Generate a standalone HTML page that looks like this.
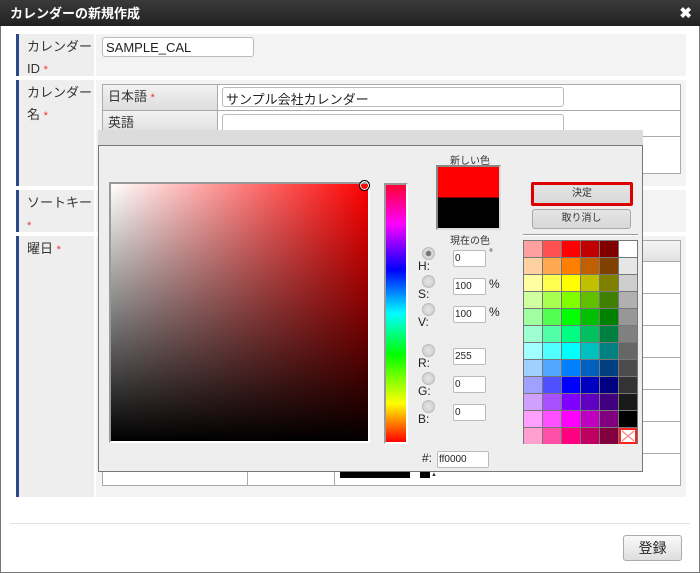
<!DOCTYPE html>
<html><head><meta charset="utf-8"><style>
*{box-sizing:border-box;margin:0;padding:0}
body{width:700px;height:573px;overflow:hidden;background:#fff;font-family:"Liberation Sans","Noto Sans CJK JP",sans-serif;font-size:13px;color:#333;position:relative}
.a{position:absolute}
.title{left:0;top:0;width:700px;height:26px;background:linear-gradient(#3a3a3a,#222);color:#fff;font-weight:bold;font-size:13px;padding:3px 0 0 10px}
.frame{left:0;top:26px;width:700px;height:547px;border:1px solid #777;border-top:none}
.lbl{background:#eee;border-left:3px solid #2b4a8b;padding:2px 0 0 8px;line-height:22px;font-size:13px;color:#333}
.val{background:#f3f3f3}
.star{color:#e33;font-size:11px}
.inp{background:#fff;border:1px solid #bbb;border-radius:3px}
.ih{background:linear-gradient(#f2f2f2,#ddd);border:1px solid #aaa;padding:1px 0 0 5px;font-size:13px}
.ic{background:#fff;border:1px solid #aaa}
.pk{left:98px;top:130px;width:545px;height:342px;background:#eee;border:1px solid #777;border-top:none}
.sm{font-size:11px}
.radio{width:13px;height:13px;border-radius:50%;background:radial-gradient(#e6e6e6,#c8c8c8);border:1px solid #bbb}
.ti{background:#fff;border:1px solid #bbb;border-radius:2px;height:17px;font-size:10px;padding:2px 0 0 1px;color:#222;width:33px}
.L{font-size:12px;color:#222}
.pal{left:523px;top:240px;width:115px;height:204px;background:#777;display:grid;grid-template-columns:repeat(6,18px);grid-template-rows:repeat(12,16px);gap:1px;padding:1px}
.btn{background:linear-gradient(#e4e4e4,#d8d8d8);border:1px solid #aaa;border-radius:3px;text-align:center;font-size:10px;color:#333}
</style></head><body>
<div class="a title">カレンダーの新規作成</div>
<div class="a" style="right:8px;top:4px;color:#fff;font-weight:bold;font-size:15px">✖</div>
<div class="a frame"></div>

<div class="a lbl" style="left:16px;top:34px;width:78px;height:42px">カレンダー<br>ID <span class="star">*</span></div>
<div class="a val" style="left:96px;top:34px;width:590px;height:42px"></div>
<div class="a inp" style="left:102px;top:37px;width:152px;height:20px;padding:2px 0 0 3px;font-size:13px;color:#222">SAMPLE_CAL</div>

<div class="a lbl" style="left:16px;top:80px;width:78px;height:106px">カレンダー<br>名 <span class="star">*</span></div>
<div class="a val" style="left:96px;top:80px;width:590px;height:106px"></div>
<div class="a ih" style="left:102px;top:84px;width:116px;height:27px">日本語 <span class="star">*</span></div>
<div class="a ic" style="left:217px;top:84px;width:464px;height:27px"></div>
<div class="a inp" style="left:222px;top:87px;width:342px;height:20px;padding:1px 0 0 3px;font-size:13px;color:#222">サンプル会社カレンダー</div>
<div class="a ih" style="left:102px;top:110px;width:116px;height:27px">英語</div>
<div class="a ic" style="left:217px;top:110px;width:464px;height:27px"></div>
<div class="a inp" style="left:222px;top:114px;width:342px;height:20px"></div>
<div class="a ic" style="left:217px;top:136px;width:464px;height:38px"></div>

<div class="a lbl" style="left:16px;top:190px;width:78px;height:42px">ソートキー<br><span class="star">*</span></div>
<div class="a val" style="left:96px;top:190px;width:590px;height:42px"></div>

<div class="a lbl" style="left:16px;top:236px;width:78px;height:261px">曜日 <span class="star">*</span></div>
<div class="a val" style="left:96px;top:236px;width:590px;height:261px"></div>
<div class="a" style="left:102px;top:240px;width:579px;height:246px;background:#fff;border:1px solid #aaa"></div>
<div class="a" style="left:102px;top:240px;width:579px;height:22px;background:linear-gradient(#f4f4f4,#e2e2e2);border:1px solid #aaa"></div>
<div class="a" style="left:642px;top:293px;width:39px;border-top:1px solid #aaa"></div>
<div class="a" style="left:642px;top:325px;width:39px;border-top:1px solid #aaa"></div>
<div class="a" style="left:642px;top:357px;width:39px;border-top:1px solid #aaa"></div>
<div class="a" style="left:642px;top:389px;width:39px;border-top:1px solid #aaa"></div>
<div class="a" style="left:642px;top:421px;width:39px;border-top:1px solid #aaa"></div>
<div class="a" style="left:642px;top:453px;width:39px;border-top:1px solid #aaa"></div>
<div class="a" style="left:247px;top:470px;height:16px;border-left:1px solid #aaa"></div>
<div class="a" style="left:334px;top:470px;height:16px;border-left:1px solid #aaa"></div>
<div class="a" style="left:340px;top:471px;width:70px;height:7px;background:#000"></div>
<div class="a" style="left:420px;top:471px;width:10px;height:7px;background:#000"></div>
<div class="a" style="left:431px;top:472px;font-size:6px">▲</div>

<div class="a" style="left:10px;top:523px;width:680px;border-top:1px solid #e4e4e4"></div>
<div class="a" style="left:623px;top:535px;width:59px;height:26px;border:1px solid #aaa;border-radius:3px;background:linear-gradient(#fafafa,#ddd);text-align:center;line-height:24px;font-size:14px;color:#222">登録</div>

<!-- picker -->
<div class="a" style="left:98px;top:130px;width:545px;height:16px;background:#dcdcdc;border-bottom:1px solid #777"></div>
<div class="a pk" style="top:146px;height:326px"></div>
<div class="a" style="left:109px;top:182px;width:261px;height:261px;border:2px solid #999;border-right-color:#fff;border-bottom-color:#fff;background:linear-gradient(to bottom,rgba(0,0,0,0),#000),linear-gradient(to right,#fff,#f00)"></div>
<div class="a" style="left:360px;top:181px;width:9px;height:9px;border:1.5px solid #fff;border-radius:50%;outline:1px solid #000"></div>
<div class="a" style="left:384px;top:183px;width:24px;height:261px;border:2px solid #999;border-right-color:#fff;border-bottom-color:#fff;background:linear-gradient(to bottom,#f03,#f0f 15%,#00f 33%,#0ff 50%,#0f0 66%,#ff0 85%,#f00)"></div>

<div class="a sm" style="left:450px;top:152px;font-size:10px">新しい色</div>
<div class="a" style="left:436px;top:165px;width:65px;height:65px;border:2px solid #888;border-right-color:#ddd;border-bottom-color:#ddd;background:linear-gradient(#f00 50%,#000 50%)"></div>
<div class="a sm" style="left:450px;top:232px;font-size:10px">現在の色</div>

<div class="a radio" style="left:422px;top:247px;background:radial-gradient(#777 30%,#ddd 40%,#c8c8c8)"></div>
<div class="a L" style="left:418px;top:259px">H:</div>
<div class="a ti" style="left:453px;top:250px">0</div><div class="a L" style="left:489px;top:248px;font-size:10px">°</div>
<div class="a radio" style="left:422px;top:275px"></div>
<div class="a L" style="left:418px;top:287px">S:</div>
<div class="a ti" style="left:453px;top:278px">100</div><div class="a L" style="left:489px;top:277px">%</div>
<div class="a radio" style="left:422px;top:303px"></div>
<div class="a L" style="left:418px;top:315px">V:</div>
<div class="a ti" style="left:453px;top:306px">100</div><div class="a L" style="left:489px;top:305px">%</div>
<div class="a radio" style="left:422px;top:344px"></div>
<div class="a L" style="left:418px;top:356px">R:</div>
<div class="a ti" style="left:453px;top:348px">255</div>
<div class="a radio" style="left:422px;top:372px"></div>
<div class="a L" style="left:418px;top:384px">G:</div>
<div class="a ti" style="left:453px;top:376px">0</div>
<div class="a radio" style="left:422px;top:400px"></div>
<div class="a L" style="left:418px;top:412px">B:</div>
<div class="a ti" style="left:453px;top:404px">0</div>
<div class="a L" style="left:422px;top:451px">#:</div>
<div class="a ti" style="left:437px;top:451px;width:52px">ff0000</div>

<div class="a btn" style="left:531px;top:182px;width:102px;height:24px;border:3px solid #d00;border-radius:2px;line-height:18px">決定</div>
<div class="a btn" style="left:532px;top:209px;width:99px;height:20px;line-height:18px">取り消し</div>
<div class="a" style="left:523px;top:234px;width:115px;border-top:1px solid #999;border-bottom:1px solid #fff"></div>

<div class="a pal">
<div style="background:#ffa0a0"></div><div style="background:#ff5050"></div><div style="background:#f00"></div><div style="background:#c00000"></div><div style="background:#800000"></div><div style="background:#fff"></div>
<div style="background:#ffd0a0"></div><div style="background:#ffa850"></div><div style="background:#ff8000"></div><div style="background:#c06000"></div><div style="background:#804000"></div><div style="background:#e6e6e6"></div>
<div style="background:#ffffa0"></div><div style="background:#ffff50"></div><div style="background:#ff0"></div><div style="background:#c0c000"></div><div style="background:#808000"></div><div style="background:#cecece"></div>
<div style="background:#d0ffa0"></div><div style="background:#a8ff50"></div><div style="background:#80ff00"></div><div style="background:#60c000"></div><div style="background:#408000"></div><div style="background:#b0b0b0"></div>
<div style="background:#a0ffa0"></div><div style="background:#50ff50"></div><div style="background:#0f0"></div><div style="background:#00c000"></div><div style="background:#008000"></div><div style="background:#979797"></div>
<div style="background:#a0ffd0"></div><div style="background:#50ffa8"></div><div style="background:#00ff80"></div><div style="background:#00c060"></div><div style="background:#008040"></div><div style="background:#808080"></div>
<div style="background:#a0ffff"></div><div style="background:#50ffff"></div><div style="background:#0ff"></div><div style="background:#00c0c0"></div><div style="background:#008080"></div><div style="background:#666"></div>
<div style="background:#a0d0ff"></div><div style="background:#50a8ff"></div><div style="background:#0080ff"></div><div style="background:#0060c0"></div><div style="background:#004080"></div><div style="background:#4c4c4c"></div>
<div style="background:#a0a0ff"></div><div style="background:#5050ff"></div><div style="background:#00f"></div><div style="background:#0000c0"></div><div style="background:#000080"></div><div style="background:#333"></div>
<div style="background:#d0a0ff"></div><div style="background:#a850ff"></div><div style="background:#8000ff"></div><div style="background:#6000c0"></div><div style="background:#400080"></div><div style="background:#1a1a1a"></div>
<div style="background:#ffa0ff"></div><div style="background:#ff50ff"></div><div style="background:#f0f"></div><div style="background:#c000c0"></div><div style="background:#800080"></div><div style="background:#000"></div>
<div style="background:#ffa0d0"></div><div style="background:#ff50a8"></div><div style="background:#ff0080"></div><div style="background:#c00060"></div><div style="background:#800040"></div>
<div style="background:#fff;border:2px solid #f22"><svg width="14" height="12" viewBox="0 0 14 12" style="display:block"><path d="M1 1L13 11M13 1L1 11" stroke="#f88" stroke-width="1.3"/></svg></div>
</div>
</body></html>
